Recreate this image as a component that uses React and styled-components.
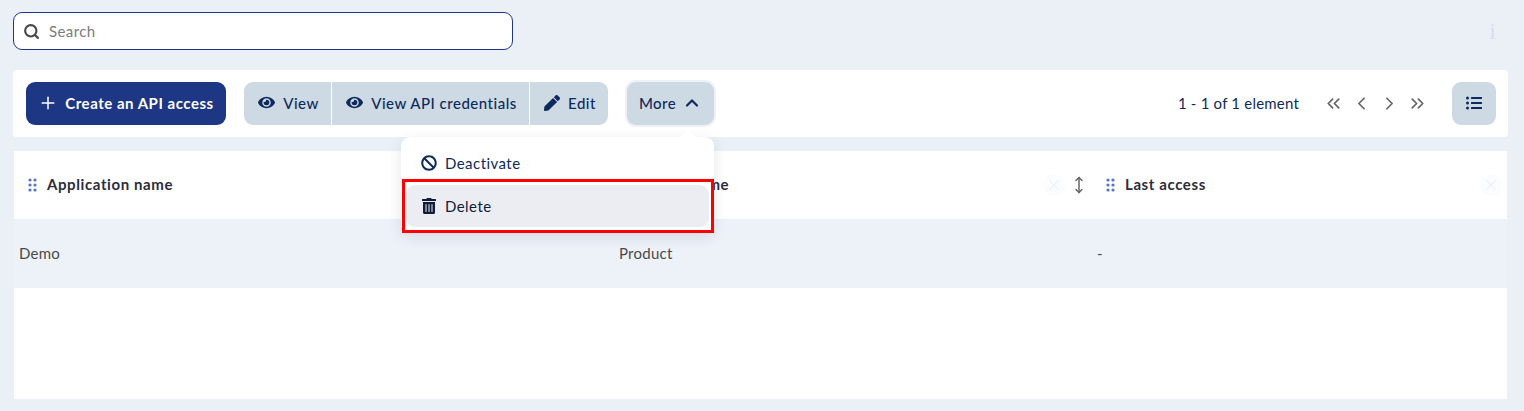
import React from "react";
import styled, { createGlobalStyle } from "styled-components";
import { FaEye, FaPen, FaBan, FaTrashAlt, FaListUl } from "react-icons/fa";
import {
  Plus,
  Search,
  ChevronUp,
  ChevronLeft,
  ChevronRight,
  ChevronsLeft,
  ChevronsRight,
  MoveVertical,
  X,
} from "lucide-react";

const GlobalStyle = createGlobalStyle`
  html, body {
    margin: 0;
    padding: 0;
    background: #ebf0f7;
    font-family: "Lato", "Noto Sans", sans-serif;
  }
  * { box-sizing: border-box; }
`;

const Page = styled.div`
  width: 1524px;
  height: 411px;
  overflow: hidden;
  padding: 12px 16px 0 13px;
`;

const SearchRow = styled.div`
  display: flex;
  align-items: center;
  justify-content: space-between;
  height: 38px;
  margin-bottom: 20px;
`;

const SearchBox = styled.div`
  width: 500px;
  height: 38px;
  display: flex;
  align-items: center;
  gap: 9px;
  padding-left: 9px;
  background: #fff;
  border: 1px solid #1d3784;
  border-radius: 9px;
  color: #484848;
`;

const Placeholder = styled.span`
  font-size: 15px;
  letter-spacing: 0.4px;
  color: #7b7b7b;
`;

const InfoMark = styled.span`
  font-family: "Liberation Serif", serif;
  font-size: 24px;
  color: #d8deef;
  padding-right: 12px;
`;

const Toolbar = styled.div`
  position: relative;
  height: 67px;
  display: flex;
  align-items: center;
  padding: 0 12px 0 13px;
  background: #fff;
  border-radius: 4px;
  margin-bottom: 14px;
`;

const PrimaryButton = styled.button`
  height: 43px;
  width: 200px;
  display: flex;
  align-items: center;
  justify-content: center;
  gap: 7px;
  padding: 0 0 2px;
  border: 0;
  border-radius: 9px;
  background: #1d3784;
  color: #fff;
  font: 700 15px "Lato", sans-serif;
  letter-spacing: 0.52px;
  margin-right: 18px;
`;

const ButtonGroup = styled.div`
  display: flex;
  height: 43px;
  margin-right: 19px;
`;

const GroupButton = styled.button`
  height: 43px;
  display: flex;
  align-items: center;
  justify-content: center;
  gap: 8px;
  padding: 0 0 2px 2px;
  width: ${(p) => p.$w}px;
  border: 0;
  border-left: ${(p) => (p.$first ? "0" : "1px solid #fff")};
  border-radius: ${(p) => (p.$first ? "9px 0 0 9px" : p.$last ? "0 9px 9px 0" : "0")};
  background: #cdd9e3;
  color: #0e2a5c;
  font: 500 15px "Lato", sans-serif;
  letter-spacing: 0.5px;
`;

const MoreButton = styled.button`
  width: 87px;
  height: 43px;
  display: flex;
  align-items: center;
  justify-content: center;
  gap: 6px;
  padding: 0 0 2px;
  border: 0;
  border-radius: 9px;
  background: #cdd9e3;
  box-shadow: 0 0 0 2px #eef2f8;
  color: #0e2a5c;
  font: 500 15px "Lato", sans-serif;
  letter-spacing: 0.4px;
`;

const Pager = styled.div`
  margin-left: auto;
  display: flex;
  align-items: center;
  color: #666;
`;

const PagerText = styled.span`
  font-size: 15px;
  letter-spacing: 0.2px;
  color: #0e2a5c;
  margin-right: 20px;
  padding-bottom: 2px;
`;

const PagerIcon = styled.span`
  width: 28px;
  display: flex;
  justify-content: center;
`;

const ListButton = styled.button`
  width: 44px;
  height: 43px;
  margin-left: 21px;
  display: flex;
  align-items: center;
  justify-content: center;
  padding: 0 0 2px;
  border: 0;
  border-radius: 9px;
  background: #cdd9e3;
  color: #0e2a5c;
`;

const Menu = styled.div`
  position: absolute;
  left: 388px;
  top: 67px;
  width: 313px;
  height: 96px;
  padding: 5px;
  background: #fff;
  border-radius: 9px;
  box-shadow: 0 4px 14px rgba(30, 50, 90, 0.12);
  z-index: 5;

  &::before {
    content: "";
    position: absolute;
    right: 19px;
    top: -7px;
    border-left: 7px solid transparent;
    border-right: 7px solid transparent;
    border-bottom: 7px solid #fff;
  }
`;

const MenuItem = styled.div`
  height: 42px;
  display: flex;
  align-items: center;
  gap: 8px;
  padding-left: 15px;
  border-radius: 9px;
  margin-bottom: 1px;
  background: ${(p) => (p.$active ? "#ecedf3" : "#fff")};
  color: ${(p) => (p.$active ? "#0f1c3a" : "#0e2a5c")};
  font-size: 15px;
  letter-spacing: 0.45px;
`;

const Highlight = styled.div`
  position: absolute;
  left: 389px;
  top: 109px;
  width: 312px;
  height: 54px;
  border: 3px solid #ff0000;
  z-index: 6;
`;

const Table = styled.div`
  height: 248px;
  margin-left: 1px;
  margin-right: 1px;
  background: #fff;
`;

const Row = styled.div`
  display: grid;
  grid-template-columns: 600px 478px 415px;
  height: ${(p) => p.$h}px;
  background: ${(p) => p.$bg || "#fff"};
`;

const HeadCell = styled.div`
  display: flex;
  align-items: center;
  padding-left: 14px;
  color: #2b2d3a;
`;

const HeadLabel = styled.span`
  margin-left: 10px;
  padding-bottom: 2px;
  font-weight: 700;
  font-size: 15px;
  letter-spacing: 0.6px;
`;

const CloseDot = styled.span`
  width: 22px;
  height: 22px;
  margin-left: auto;
  border-radius: 50%;
  background: #fbfcfd;
  color: #e9edf8;
  display: flex;
  align-items: center;
  justify-content: center;
  margin-right: ${(p) => p.$mr}px;
`;

const ResizeIcon = styled.span`
  display: flex;
  color: #666;
  margin: 0 4px 0 5px;
`;

const BodyCell = styled.div`
  display: flex;
  align-items: center;
  padding: 0 0 2px 5px;
  font-size: 15px;
  letter-spacing: 0.25px;
  color: #4a4a4a;
`;

const Grip = () => (
  <svg width="9" height="14" viewBox="0 0 9 14" fill="#5274c8">
    {[2, 7, 12].map((y) =>
      [2, 7].map((x) => <circle key={`${x}-${y}`} cx={x} cy={y} r="1.6" />)
    )}
  </svg>
);

const App = () => {
  return (
    <Page>
      <GlobalStyle />
      <SearchRow>
        <SearchBox>
          <Search size={17} strokeWidth={3} />
          <Placeholder>Search</Placeholder>
        </SearchBox>
        <InfoMark>i</InfoMark>
      </SearchRow>

      <Toolbar>
        <PrimaryButton>
          <Plus size={20} strokeWidth={1.8} />
          Create an API access
        </PrimaryButton>
        <ButtonGroup>
          <GroupButton $first $w={87}>
            <FaEye size={17} />
            View
          </GroupButton>
          <GroupButton $w={198}>
            <FaEye size={17} />
            View API credentials
          </GroupButton>
          <GroupButton $last $w={79}>
            <FaPen size={16} />
            Edit
          </GroupButton>
        </ButtonGroup>
        <MoreButton>
          More
          <ChevronUp size={20} strokeWidth={2.6} />
        </MoreButton>
        <Pager>
          <PagerText>1 - 1 of 1 element</PagerText>
          <PagerIcon>
            <ChevronsLeft size={21} />
          </PagerIcon>
          <PagerIcon>
            <ChevronLeft size={21} />
          </PagerIcon>
          <PagerIcon>
            <ChevronRight size={21} />
          </PagerIcon>
          <PagerIcon>
            <ChevronsRight size={21} />
          </PagerIcon>
          <ListButton>
            <FaListUl size={16} />
          </ListButton>
        </Pager>
        <Menu>
          <MenuItem>
            <FaBan size={16} />
            Deactivate
          </MenuItem>
          <MenuItem $active>
            <FaTrashAlt size={16} />
            Delete
          </MenuItem>
        </Menu>
        <Highlight />
      </Toolbar>

      <Table>
        <Row $h={68}>
          <HeadCell>
            <Grip />
            <HeadLabel>Application name</HeadLabel>
            <CloseDot $mr={0}>
              <X size={18} strokeWidth={1.4} />
            </CloseDot>
            <ResizeIcon>
              <MoveVertical size={18} />
            </ResizeIcon>
          </HeadCell>
          <HeadCell>
            <Grip />
            <HeadLabel>Offer name</HeadLabel>
            <CloseDot $mr={0}>
              <X size={18} strokeWidth={1.4} />
            </CloseDot>
            <ResizeIcon>
              <MoveVertical size={18} />
            </ResizeIcon>
          </HeadCell>
          <HeadCell>
            <Grip />
            <HeadLabel>Last access</HeadLabel>
            <CloseDot $mr={5}>
              <X size={18} strokeWidth={1.4} />
            </CloseDot>
          </HeadCell>
        </Row>
        <Row $h={69} $bg="#edf1f8">
          <BodyCell>Demo</BodyCell>
          <BodyCell>Product</BodyCell>
          <BodyCell>-</BodyCell>
        </Row>
      </Table>
    </Page>
  );
};

export default App;
